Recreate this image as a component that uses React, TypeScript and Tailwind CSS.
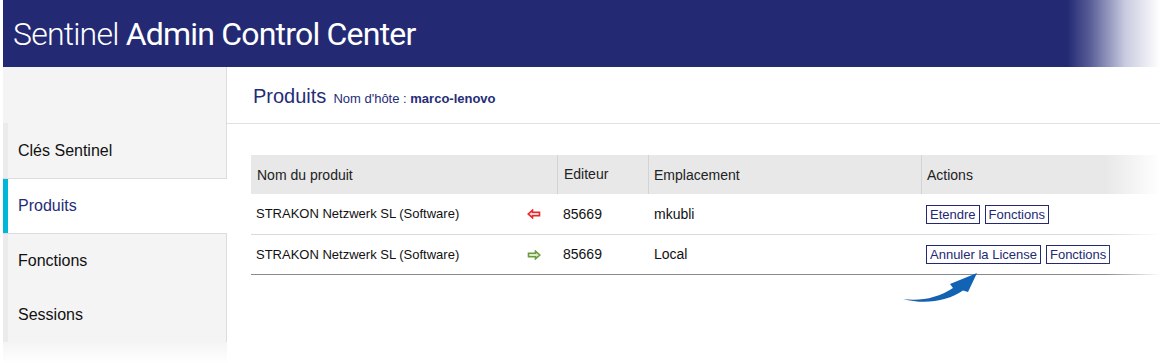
import React from "react";

function LeftArrow() {
  return (
    <svg width="14" height="10" viewBox="0 0 14 10">
      <path d="M1.2 5 L5.5 1.2 L5.5 3.3 L12.5 3.3 L12.5 6.7 L5.5 6.7 L5.5 8.8 Z" fill="#fbd3d3" stroke="#e8262c" strokeWidth="1.6" strokeLinejoin="miter" />
    </svg>
  );
}

function RightArrow() {
  return (
    <svg width="14" height="10" viewBox="0 0 14 10">
      <path d="M12.8 5 L8.5 1.2 L8.5 3.3 L1.5 3.3 L1.5 6.7 L8.5 6.7 L8.5 8.8 Z" fill="#dcebc8" stroke="#6a9b3c" strokeWidth="1.6" strokeLinejoin="miter" />
    </svg>
  );
}

function Btn({ children }: { children: React.ReactNode }) {
  return (
    <span className="inline-flex h-[19px] items-center border border-[#232a73] px-[3px] text-[13px] leading-none text-[#232a73]">
      {children}
    </span>
  );
}

function SideItem({ label, active = false, h }: { label: string; active?: boolean; h: string }) {
  return (
    <div className={`flex ${h} ${active ? "bg-white border-y border-[#dddddd]" : "bg-[#f4f4f4]"}`}>
      <div className={`w-[5px] ${active ? "bg-[#00b6d9]" : "bg-[#ebebeb]"}`} />
      <div
        className={`flex flex-1 items-center pl-[10px] text-[16px] ${
          active ? "text-[#262d78]" : "border-r border-[#dddddd] text-[#111111]"
        }`}
      >
        {label}
      </div>
    </div>
  );
}

export default function App() {
  return (
    <div className="relative h-[363px] w-[1160px] overflow-hidden bg-white pl-[3px] font-['Liberation_Sans',Arial,sans-serif]">
      {/* Header */}
      <div className="flex h-[67px] items-center bg-[linear-gradient(to_right,#232a73_0%,#232a73_92%,#5a5f98_94%,#c9cbe0_97%,#ffffff_100%)] pl-[10px]">
        <span className="font-['Roboto',sans-serif] text-[32px] tracking-[-0.8px] text-white">
          <span className="font-light">Sentinel</span>{" "}
          <span className="font-normal">Admin Control Center</span>
        </span>
      </div>

      <div className="flex h-[296px]">
        {/* Sidebar */}
        <div className="flex w-[224px] flex-col">
          <div className="h-[56px] border-r border-[#dddddd] bg-[#f4f4f4]" />
          <SideItem label="Clés Sentinel" h="h-[55px]" />
          <SideItem label="Produits" active h="h-[56px]" />
          <SideItem label="Fonctions" h="h-[54px]" />
          <SideItem label="Sessions" h="h-[54px]" />
          <div className="h-[21px] bg-[linear-gradient(to_bottom,#f4f4f4,#ffffff)]" />
        </div>

        {/* Content */}
        <div className="flex flex-1 flex-col">
          <div className="h-[57px] border-b border-[#e2e2e2] pl-[26px] pt-[17px]">
            <span className="text-[20px] leading-[24px] text-[#262d78]">Produits</span>
            <span className="ml-[7px] text-[13px] text-[#262d78]">
              Nom d'hôte : <b>marco-lenovo</b>
            </span>
          </div>

          <div className="relative ml-[24px] mt-[31px]">
            <div className="grid grid-cols-[269px_37px_91px_273px_1fr]">
              {/* header */}
              <div className="col-span-2 flex h-[39px] items-center bg-[#e8e8e8] pl-[6px] pt-[2px] text-[14px] text-[#222222]">
                Nom du produit
              </div>
              <div className="flex h-[39px] items-center border-l border-[#d3d3d3] bg-[#e8e8e8] pl-[6px] text-[14px] text-[#222222]">
                Editeur
              </div>
              <div className="flex h-[39px] items-center border-l border-[#d3d3d3] bg-[#e8e8e8] pl-[5px] pt-[2px] text-[14px] text-[#222222]">
                Emplacement
              </div>
              <div className="flex h-[39px] items-center border-l border-[#d3d3d3] bg-[#e8e8e8] pl-[5px] pt-[2px] text-[14px] text-[#222222]">
                Actions
              </div>

              {/* row 1 */}
              <div className="flex h-[41px] items-center border-b border-[#d9d9d9] pl-[5px] text-[13px] text-[#111111]">
                STRAKON Netzwerk SL (Software)
              </div>
              <div className="flex h-[41px] items-center border-b border-[#d9d9d9] pl-[7px]">
                <LeftArrow />
              </div>
              <div className="flex h-[41px] items-center border-b border-[#d9d9d9] pl-[6px] text-[14px] text-[#111111]">
                85669
              </div>
              <div className="flex h-[41px] items-center border-b border-[#d9d9d9] pl-[6px] text-[14px] text-[#111111]">
                mkubli
              </div>
              <div className="flex h-[41px] items-center gap-[5px] border-b border-[#d9d9d9] pl-[5px]">
                <Btn>Etendre</Btn>
                <Btn>Fonctions</Btn>
              </div>

              {/* row 2 */}
              <div className="flex h-[40px] items-center border-b border-[#8a8a8a] pl-[5px] text-[13px] text-[#111111]">
                STRAKON Netzwerk SL (Software)
              </div>
              <div className="flex h-[40px] items-center border-b border-[#8a8a8a] pl-[7px]">
                <RightArrow />
              </div>
              <div className="flex h-[40px] items-center border-b border-[#8a8a8a] pl-[6px] text-[14px] text-[#111111]">
                85669
              </div>
              <div className="flex h-[40px] items-center border-b border-[#8a8a8a] pl-[6px] text-[14px] text-[#111111]">
                Local
              </div>
              <div className="flex h-[40px] items-center gap-[5px] border-b border-[#8a8a8a] pl-[5px]">
                <Btn>Annuler la License</Btn>
                <Btn>Fonctions</Btn>
              </div>
            </div>
            <div className="pointer-events-none absolute bottom-0 right-0 top-0 w-[55px] bg-[linear-gradient(to_right,rgba(255,255,255,0),#ffffff)]" />
          </div>
        </div>
      </div>

      {/* Blue swoosh arrow */}
      <svg className="absolute left-[900px] top-[270px]" width="80" height="36" viewBox="0 0 80 36">
        <defs>
          <linearGradient id="sw" x1="0" y1="0" x2="1" y2="0">
            <stop offset="0" stopColor="#1f5fa8" />
            <stop offset="1" stopColor="#0f63b8" />
          </linearGradient>
        </defs>
        <path
          d="M3 29 C20 31.5, 38 28, 53 18 L50 14 L77 3 L68 22 L63 20.5 C48 31, 25 35, 3 29 Z"
          fill="url(#sw)"
        />
      </svg>
    </div>
  );
}
